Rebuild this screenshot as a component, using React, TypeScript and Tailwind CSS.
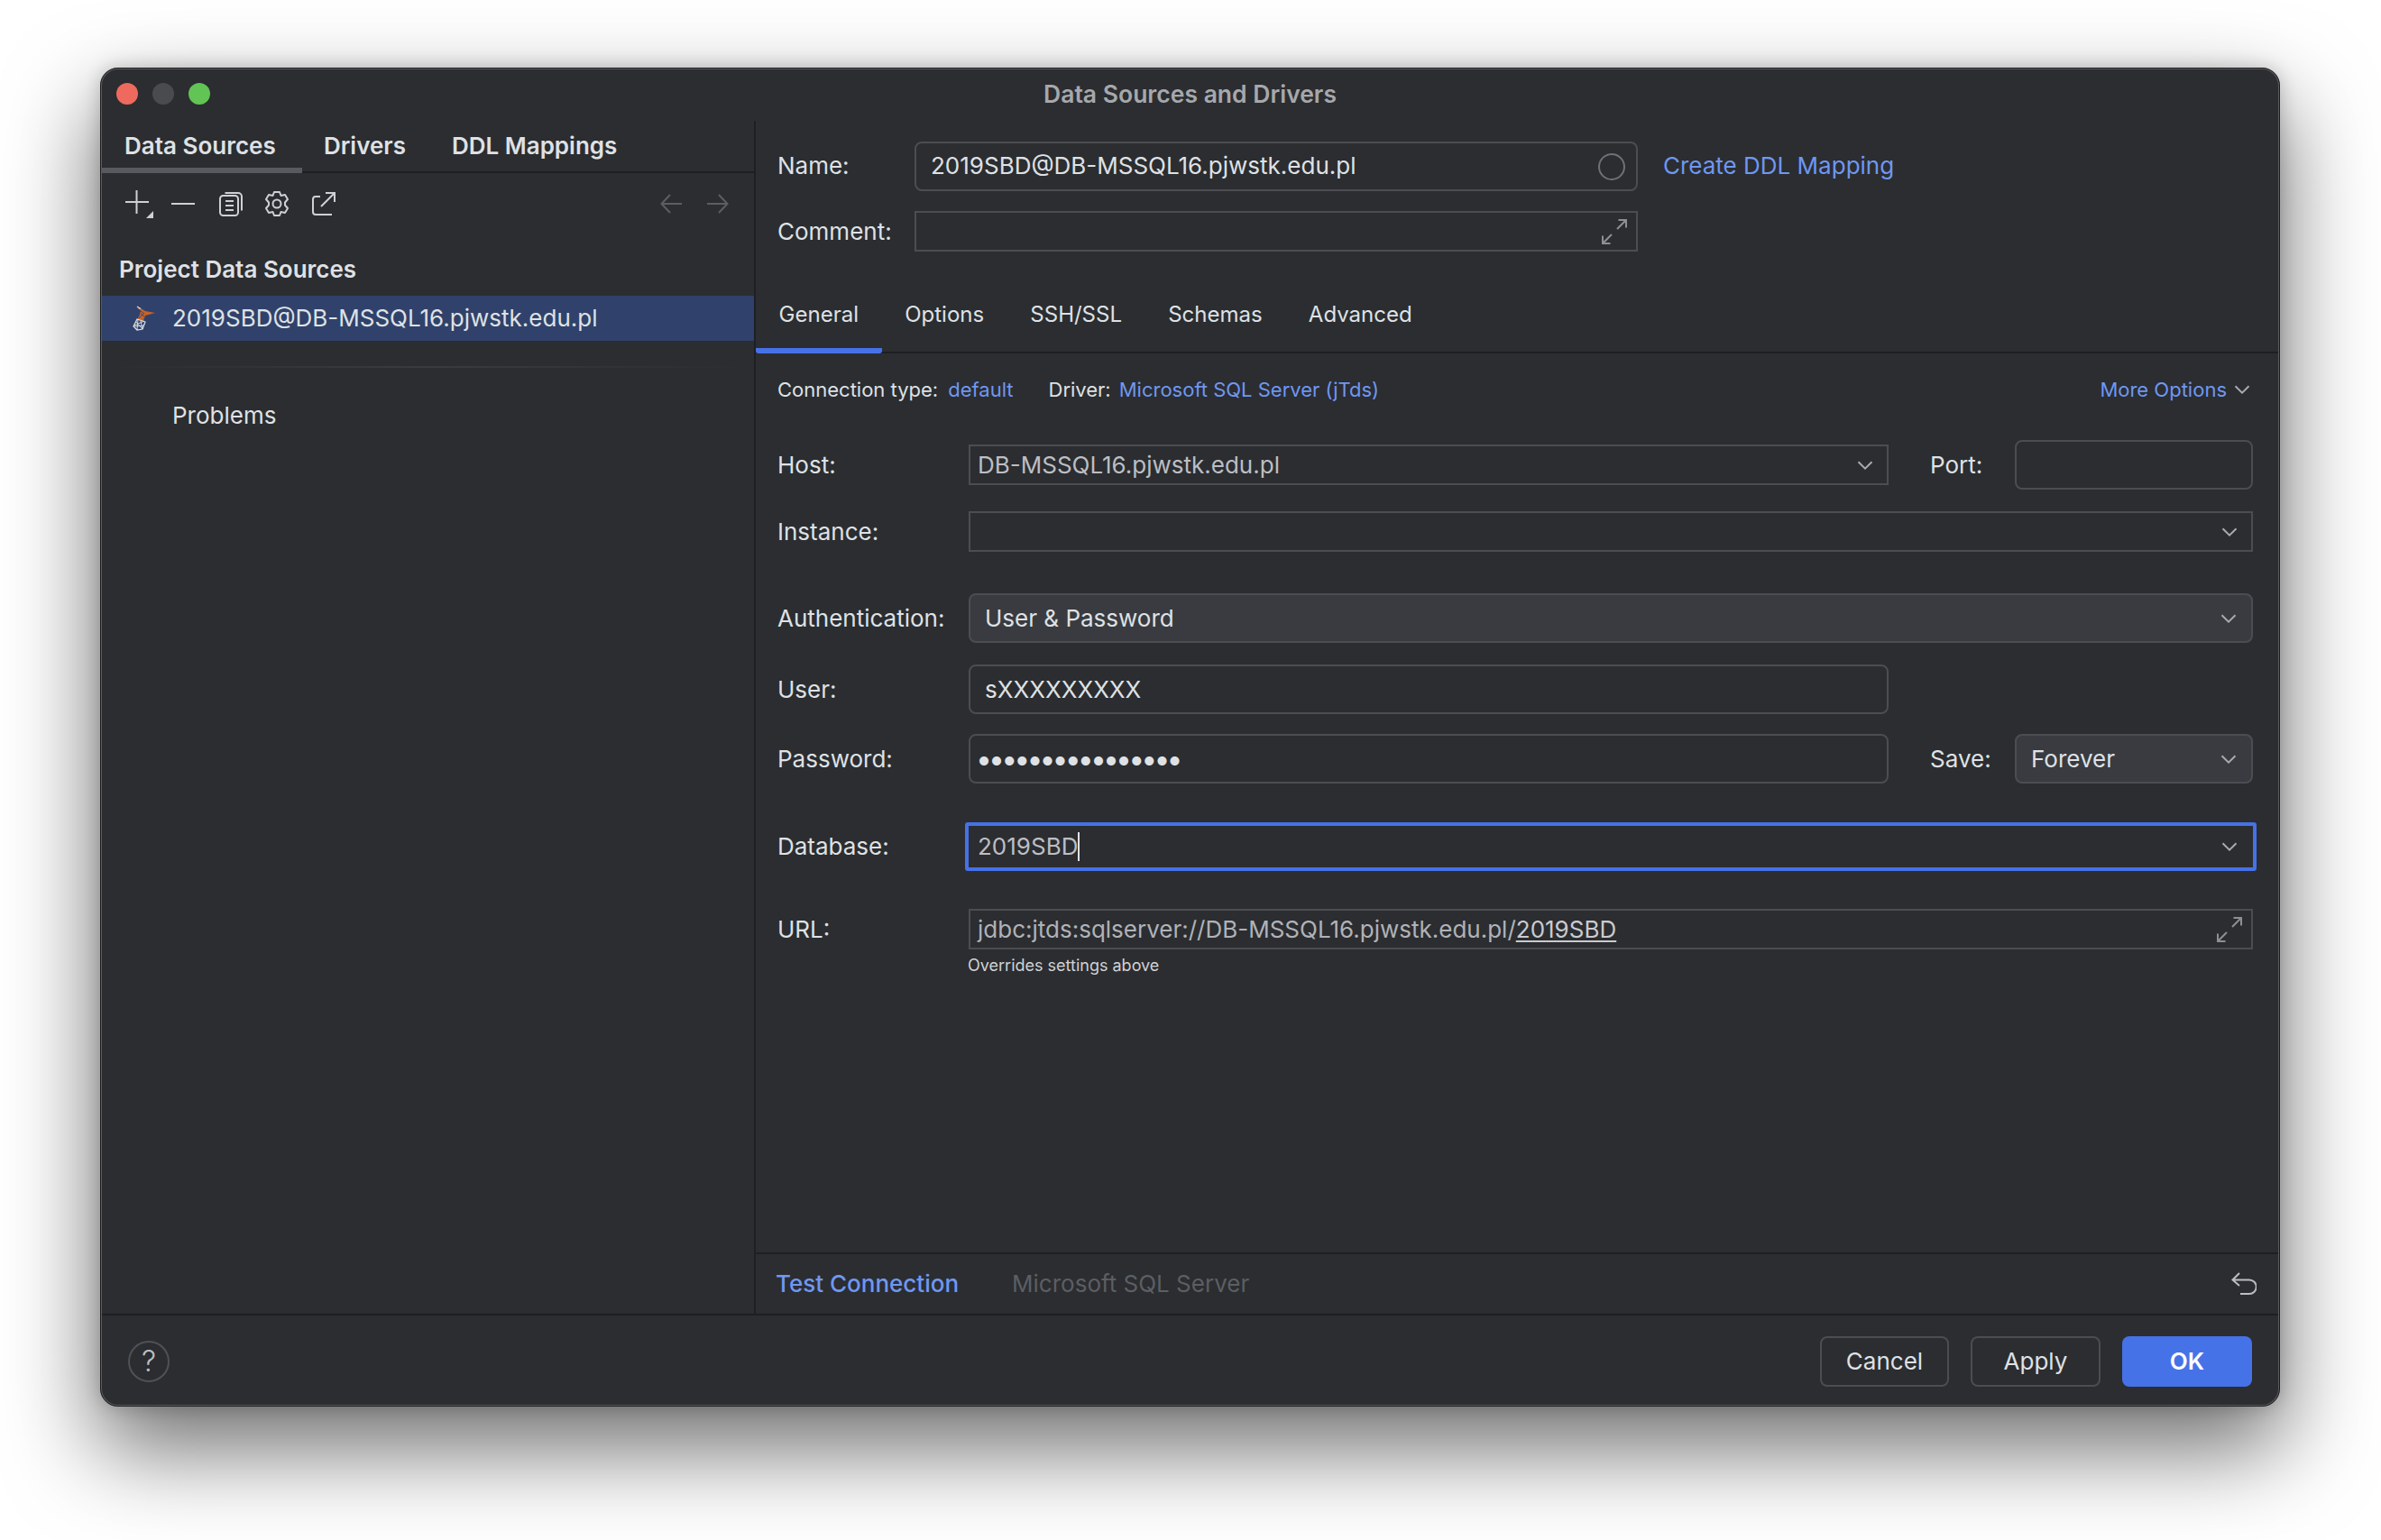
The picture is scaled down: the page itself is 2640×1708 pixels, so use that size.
import type { ReactNode } from "react";

function Chevron({ className = "" }: { className?: string }) {
  return (
    <svg width="18" height="10" viewBox="0 0 18 10" fill="none" stroke="#a8abb0" strokeWidth="2" className={className}>
      <path d="M1.5 1.2 9 8.6l7.5-7.4" />
    </svg>
  );
}

function Expand() {
  return (
    <svg width="28" height="28" viewBox="0 0 28 28" fill="none" stroke="#8c8f94" strokeWidth="2">
      <path d="M17 11 27 1M18.5 1H27v8.5M11 17 1 27M1 18.5V27h8.5" />
    </svg>
  );
}

function SqlLogo() {
  return (
    <svg width="26" height="28" viewBox="0 0 26 28" fill="none">
      <path d="M5 3 9 5 8 10l-3 6 6 3 3-8 11-3-11-2-5-3z" fill="#c8622a" />
      <path d="M7 5l5 3M9 9l4 3M7 14l6-6" stroke="#30426b" strokeWidth="0.8" />
      <path d="M5 1l4 2.500" stroke="#dfe1e5" strokeWidth="1.4" />
      <path d="M5 15 1 23l4 4 6-1 3-8-3-1-6-2z" fill="#30426b" stroke="#dfe1e5" strokeWidth="1.2" />
      <path d="M2 22l11-5M5 27l1-12M4 18l7 8M11 26l-2-9M1 23l12-1" stroke="#dfe1e5" strokeWidth="0.9" />
    </svg>
  );
}

function ToolbarIcons() {
  return (
    <div className="flex items-center gap-[25px]">
      <svg width="33" height="33" viewBox="0 0 33 33" fill="none" stroke="#ced0d6" strokeWidth="2">
        <path d="M13.5 1v26M1 14h26" />
        <path d="M32 24v8h-8z" fill="#ced0d6" stroke="none" />
      </svg>
      <svg width="26" height="4" viewBox="0 0 26 4" className="-ml-[6px]" fill="none" stroke="#ced0d6" strokeWidth="2">
        <path d="M0 2h26" />
      </svg>
      <svg width="26" height="27" viewBox="0 0 26 27" className="ml-[2px]" fill="none" stroke="#ced0d6" strokeWidth="2">
        <rect x="1" y="4" width="20" height="22" rx="3.5" />
        <path d="M6.5 1h14.5a4 4 0 0 1 4 4v15.5M7 10h9M7 15h9M7 20h9" />
      </svg>
      <svg width="28" height="30" viewBox="0 0 28 30" className="-ml-[1px]" fill="none" stroke="#ced0d6" strokeWidth="2">
        <path d="M11 2h6l1.500 4 4.500-1 3 5-3 3.500v3l3 3.500-3 5-4.500-1-1.500 4h-6l-1.500-4-4.500 1-3-5 3-3.500v-3l-3-3.500 3-5 4.500 1z" strokeLinejoin="round" />
        <circle cx="14" cy="15" r="4.500" />
      </svg>
      <svg width="26" height="26" viewBox="0 0 26 26" fill="none" stroke="#ced0d6" strokeWidth="2">
        <path d="M9 5H4a3 3 0 0 0-3 3v14a3 3 0 0 0 3 3h18M10 16 25 1M15 1h10v10" />
      </svg>
    </div>
  );
}

function Arrow({ flip = false }: { flip?: boolean }) {
  return (
    <svg width="24" height="22" viewBox="0 0 24 22" fill="none" stroke="#5c5e63" strokeWidth="2" className={flip ? "rotate-180" : ""}>
      <path d="M24 11H2M11 1 1.500 11l9.500 10" />
    </svg>
  );
}

function Row({ label, children, className = "" }: { label: string; children: ReactNode; className?: string }) {
  return (
    <div className={`flex items-center pl-[24px] pr-[28px] ${className}`}>
      <span className="w-[212px] shrink-0 text-[#dfe1e5]">{label}</span>
      {children}
    </div>
  );
}

const inputBox = "flex items-center border-2 border-[#4b4d52] rounded-[8px] h-[55px] pl-[16px] pr-[12px]";
const comboBox = "flex items-center border-2 border-[#4b4d52] h-[45px] pl-[8px] text-[#bcbec4]";
const selectBox = "flex items-center border-2 border-[#4b4d52] rounded-[8px] h-[55px] bg-[#393b40] pl-[16px] pr-[16px]";

function App() {
  return (
    <div className="w-[2640px] h-[1708px] bg-white pl-[111px] pt-[75px] font-['Inter',sans-serif] text-[26px] leading-none overflow-hidden">
      <div className="w-[2417px] h-[1485px] flex flex-col bg-[#2b2d30] rounded-[20px] border-2 border-[#5a5b5e] outline outline-1 -outline-offset-1 outline-black/70 shadow-[0_44px_100px_4px_rgba(0,0,0,0.56),0_0_20px_rgba(0,0,0,0.2)] overflow-hidden">
        {/* title bar */}
        <div className="h-[57px] shrink-0 flex items-center pl-[16px] pr-[16px] pb-[3px]">
          <div className="flex gap-[16px]">
            <div className="w-[24px] h-[24px] rounded-full bg-[#ee6a5f]" />
            <div className="w-[24px] h-[24px] rounded-full bg-[#4a4b4e]" />
            <div className="w-[24px] h-[24px] rounded-full bg-[#61c454]" />
          </div>
          <div className="flex-1 text-center pr-[104px] text-[26.5px] font-semibold text-[#a6a8ac]">Data Sources and Drivers</div>
        </div>

        <div className="flex-1 flex min-h-0">
          {/* left panel */}
          <div className="w-[725px] shrink-0 flex flex-col border-r-2 border-[#1e1f22]">
            <div className="h-[58px] shrink-0 flex border-b-2 border-[#1e1f22] font-semibold text-[#dfe1e5]">
              <div className="w-[222px] h-[58px] pl-[25px] pt-[15px] border-b-[6px] border-[#585a5f]">Data Sources</div>
              <div className="pl-[24px] pt-[15px]">Drivers</div>
              <div className="pl-[51px] pt-[15px]">DDL Mappings</div>
            </div>
            <div className="h-[68px] shrink-0 flex items-center justify-between pl-[25px] pr-[28px]">
              <ToolbarIcons />
              <div className="flex gap-[28px]">
                <Arrow />
                <Arrow flip />
              </div>
            </div>
            <div className="h-[68px] shrink-0 pl-[19px] pt-[26px] font-semibold text-[#dfe1e5]">Project Data Sources</div>
            <div className="h-[50px] shrink-0 flex items-center pl-[34px] bg-[#30426b] text-[#dfe1e5]">
              <SqlLogo />
              <span className="ml-[18px]">2019SBD@DB-MSSQL16.pjwstk.edu.pl</span>
            </div>
            <div className="h-[2px] mt-[28px] mx-[10px] bg-gradient-to-r from-[#2b2d30] via-[#393b40] to-[#2b2d30]" />
            <div className="pl-[78px] mt-[40px] text-[#dfe1e5]">Problems</div>
          </div>

          {/* right panel */}
          <div className="flex-1 min-w-0 flex flex-col">
            <div className="flex items-center pl-[24px] mt-[23px]">
              <span className="w-[152px] shrink-0 pb-[2px] text-[#dfe1e5]">Name:</span>
              <div className={`${inputBox} w-[802px] justify-between text-[#dfe1e5]`}>
                <span className="pb-[2px]">2019SBD@DB-MSSQL16.pjwstk.edu.pl</span>
                <div className="w-[30px] h-[30px] rounded-full border-2 border-[#6f7176]" />
              </div>
              <span className="ml-[28px] pb-[2px] text-[#6f97f2]">Create DDL Mapping</span>
            </div>
            <div className="flex items-center pl-[24px] mt-[22px]">
              <span className="w-[152px] shrink-0 text-[#dfe1e5]">Comment:</span>
              <div className="flex items-center justify-end w-[802px] h-[45px] border-2 border-[#4b4d52] pr-[10px]">
                <Expand />
              </div>
            </div>

            <div className="h-[113px] shrink-0 flex items-start border-b-2 border-[#1e1f22] text-[24px] text-[#dfe1e5]">
              <div className="h-[113px] px-[25.6px] pt-[58px] border-b-[6px] border-[#4672e8] rounded-b-[3px]">General</div>
              <div className="px-[25.6px] pt-[58px]">Options</div>
              <div className="px-[25.6px] pt-[58px]">SSH/SSL</div>
              <div className="px-[25.6px] pt-[58px]">Schemas</div>
              <div className="px-[25.6px] pt-[58px]">Advanced</div>
            </div>

            <div className="flex-1 min-h-0">
              <div className="flex items-center justify-between pl-[24px] pr-[31px] mt-[29px] text-[22px] h-[22px]">
                <div className="flex items-center text-[#dfe1e5]">
                  <span>Connection type:</span>
                  <span className="ml-[11px] text-[#6f97f2]">default</span>
                  <span className="ml-[39px]">Driver:</span>
                  <span className="ml-[9px] text-[#6f97f2]">Microsoft SQL Server (jTds)</span>
                </div>
                <div className="flex items-center gap-[8px] text-[#6f97f2]">
                  <span>More Options</span>
                  <Chevron />
                </div>
              </div>

              <Row label="Host:" className="mt-[45px] h-[55px]">
                <div className={`${comboBox} w-[1020px] justify-between pr-[15px]`}>
                  <span>DB-MSSQL16.pjwstk.edu.pl</span>
                  <Chevron />
                </div>
                <span className="w-[94px] ml-[46px] text-[#dfe1e5]">Port:</span>
                <div className={`${inputBox} flex-1`} />
              </Row>
              <Row label="Instance:" className="mt-[24px]">
                <div className={`${comboBox} flex-1 justify-end pr-[15px]`}>
                  <Chevron />
                </div>
              </Row>
              <Row label="Authentication:" className="mt-[46px]">
                <div className={`${selectBox} flex-1 justify-between text-[#dfe1e5]`}>
                  <span>User &amp; Password</span>
                  <Chevron />
                </div>
              </Row>
              <Row label="User:" className="mt-[24px]">
                <div className={`${inputBox} w-[1020px] text-[#dfe1e5]`}>sXXXXXXXXX</div>
              </Row>
              <Row label="Password:" className="mt-[22px]">
                <div className={`${inputBox} w-[1020px] !pl-[6px] text-[#dfe1e5] text-[32px] tracking-[-3.9px]`}>••••••••••••••••</div>
                <span className="w-[94px] ml-[46px] text-[#dfe1e5]">Save:</span>
                <div className={`${selectBox} flex-1 justify-between text-[#dfe1e5]`}>
                  <span>Forever</span>
                  <Chevron />
                </div>
              </Row>
              <Row label="Database:" className="mt-[43px] !pr-[24px]">
                <div className="flex items-center justify-between -ml-[4px] flex-1 h-[54px] border-[4px] border-[#4672e8] rounded-[3px] pl-[10px] pr-[17px] text-[#bcbec4]">
                  <span className="flex items-center">
                    2019SBD
                    <span className="w-[2px] h-[32px] bg-[#dfe1e5]" />
                  </span>
                  <Chevron />
                </div>
              </Row>
              <Row label="URL:" className="mt-[42px]">
                <div className={`${comboBox} flex-1 justify-between pr-[10px] !text-[#b0b2b8]`}>
                  <span>
                    jdbc:jtds:sqlserver://DB-MSSQL16.pjwstk.edu.pl/
                    <span className="underline decoration-2 underline-offset-[3px] text-[#c9cbd0]">2019SBD</span>
                  </span>
                  <Expand />
                </div>
              </Row>
              <div className="pl-[235px] mt-[9px] text-[18px] text-[#d0d2d6]">Overrides settings above</div>
            </div>

            <div className="h-[68px] shrink-0 flex items-center justify-between border-t-2 border-[#1e1f22] pl-[22px] pr-[24px]">
              <div className="flex items-center">
                <span className="text-[#6f97f2] font-medium">Test Connection</span>
                <span className="ml-[59px] text-[#5c5e63]">Microsoft SQL Server</span>
              </div>
              <svg width="28" height="26" viewBox="0 0 28 26" fill="none" stroke="#bcbec4" strokeWidth="2">
                <path d="M9 1 1.500 8.500 9 15M2 8.500h18a7 7 0 0 1 0 15.500H10" />
              </svg>
            </div>
          </div>
        </div>

        {/* bottom bar */}
        <div className="h-[101px] shrink-0 flex items-center justify-between border-t-2 border-[#1e1f22] pl-[29px] pr-[29px] pt-[2px]">
          <div className="w-[46px] h-[46px] rounded-full border-2 border-[#4f5156] flex items-center justify-center text-[#bcbec4] text-[32px] font-light">?</div>
          <div className="flex gap-[24px]">
            <div className="w-[143px] h-[56px] rounded-[8px] border-2 border-[#4b4d52] flex items-center justify-center text-[#dfe1e5]">Cancel</div>
            <div className="w-[144px] h-[56px] rounded-[8px] border-2 border-[#4b4d52] flex items-center justify-center text-[#dfe1e5]">Apply</div>
            <div className="w-[144px] h-[56px] rounded-[8px] bg-[#4672e8] flex items-center justify-center text-white font-semibold">OK</div>
          </div>
        </div>
      </div>
    </div>
  );
}

export default App;
